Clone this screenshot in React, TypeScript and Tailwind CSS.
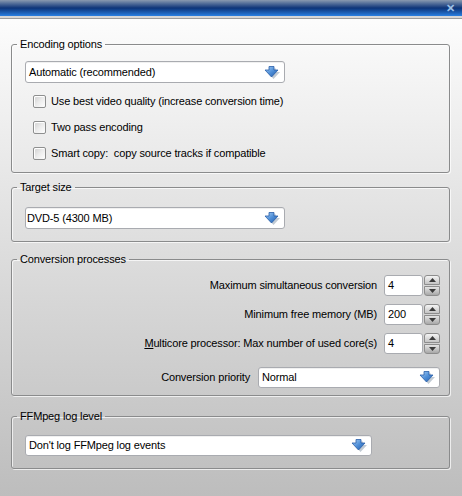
import React from "react";

const font = { fontFamily: '"Liberation Sans", Arial, sans-serif' };

function DropArrow() {
  return (
    <svg width="16" height="13" viewBox="0 0 16 13">
      <defs>
        <linearGradient id="ag" x1="0" y1="0" x2="1" y2="1">
          <stop offset="0" stopColor="#a9d0f5" />
          <stop offset="0.5" stopColor="#4f8fd8" />
          <stop offset="1" stopColor="#1f5aa8" />
        </linearGradient>
      </defs>
      <polygon points="6,1.5 11,1.5 11,5 15,5 8.5,12 2,5 6,5" fill="#9aa8b8" opacity="0.6" transform="translate(1,1)" />
      <polygon points="5,0.5 10,0.5 10,4 14,4 7.5,11 1,4 5,4" fill="url(#ag)" stroke="#2a5ea8" strokeWidth="0.8" strokeLinejoin="round" />
    </svg>
  );
}

const txt = "text-[11px] tracking-[-0.15px] text-black leading-none whitespace-pre";

function Dropdown({ text, className }: { text: string; className: string }) {
  return (
    <div
      className={
        "flex items-center justify-between bg-white border border-[#a9abb0] rounded-[3px] pl-[3px] pr-[4px] shadow-[inset_0_1px_0_#f0f0f0] " +
        className
      }
    >
      <span className={txt}>{text}</span>
      <DropArrow />
    </div>
  );
}

function Checkbox({ label }: { label: string }) {
  return (
    <div className="flex items-center h-[26px] pl-[21px]">
      <div className="w-[13px] h-[13px] border border-[#8e8f8f] rounded-[2px] bg-gradient-to-br from-[#cfcfcf] via-[#ececec] to-white shadow-[inset_1px_1px_0_#fff]" />
      <span className={"ml-[5px] " + txt}>{label}</span>
    </div>
  );
}

function Spinner() {
  return (
    <div className="flex flex-col w-[16px] h-[21px] gap-[1px]">
      <div className="flex-1 flex items-center justify-center rounded-t-[3px] border border-[#8d8d8d] bg-gradient-to-b from-[#f4f4f4] to-[#c4c4c4]">
        <svg width="7" height="4" viewBox="0 0 7 4"><polygon points="0,4 7,4 3.5,0" fill="#3a3a3a" /></svg>
      </div>
      <div className="flex-1 flex items-center justify-center rounded-b-[3px] border border-[#8d8d8d] bg-gradient-to-b from-[#e4e4e4] to-[#a8a8a8]">
        <svg width="7" height="4" viewBox="0 0 7 4"><polygon points="0,0 7,0 3.5,4" fill="#3a3a3a" /></svg>
      </div>
    </div>
  );
}

function SpinRow({ label, value }: { label: React.ReactNode; value: string }) {
  return (
    <div className="flex items-center justify-end h-[22px]">
      <span className={"mr-[7px] " + txt}>{label}</span>
      <div className="w-[39px] h-[21px] bg-white border border-[#a9abb0] rounded-[3px] flex items-center pl-[3px]">
        <span className={txt}>{value}</span>
      </div>
      <div className="ml-[1px]">
        <Spinner />
      </div>
    </div>
  );
}

function Group({ title, children, className }: { title: string; children: React.ReactNode; className?: string }) {
  return (
    <fieldset
      className={
        "border border-[#8a8b8c] rounded-[3px] shadow-[inset_1px_1px_0_rgba(255,255,255,0.7),1px_1px_0_rgba(255,255,255,0.7)] " +
        (className || "")
      }
    >
      <legend className="ml-[5px] px-[3px] text-[11px] tracking-[-0.15px] leading-[14px] text-black">{title}</legend>
      {children}
    </fieldset>
  );
}

export default function App() {
  return (
    <div
      className="w-[462px] h-[496px] overflow-hidden flex flex-col bg-gradient-to-b from-[#ffffff] to-[#bdbdbd]"
      style={font}
    >
      {/* title bar */}
      <div className="relative h-[16px] bg-gradient-to-b from-[#8a9ab0] via-[#0d3478] to-[#2a80e2] flex items-center justify-end pr-[7px]">
        <span className="text-[11px] font-bold text-[#9fc0e6] leading-none">✕</span>
      </div>
      <div className="h-[2px] bg-[#d6d6d6]" />
      <div className="h-[1px] bg-[#9c9c9c]" />

      <div className="flex flex-col pl-[11px] pr-[12px] pt-[18px]">
        <Group title="Encoding options" className="pb-[6px]">
          <div className="px-[13px]">
            <Dropdown text="Automatic (recommended)" className="mt-[10px] w-[260px] h-[22px]" />
          </div>
          <div className="mt-[5px]">
            <Checkbox label="Use best video quality (increase conversion time)" />
            <Checkbox label="Two pass encoding" />
            <Checkbox label="Smart copy:  copy source tracks if compatible" />
          </div>
        </Group>

        <Group title="Target size" className="mt-[7px] pb-[12px]">
          <div className="px-[13px]">
            <Dropdown text="DVD-5 (4300 MB)" className="mt-[13px] w-[260px] h-[22px] !pl-[1px]" />
          </div>
        </Group>

        <Group title="Conversion processes" className="mt-[10px] pb-[7px]">
          <div className="pr-[9px]">
            <div className="mt-[8px] flex flex-col gap-[7px]">
              <SpinRow label="Maximum simultaneous conversion" value="4" />
              <SpinRow label="Minimum free memory (MB)" value="200" />
              <SpinRow
                label={
                  <>
                    <span className="underline">M</span>ulticore processor: Max number of used core(s)
                  </>
                }
                value="4"
              />
            </div>
            <div className="mt-[13px] flex items-center justify-end">
              <span className={"mr-[8px] " + txt}>Conversion priority</span>
              <Dropdown text="Normal" className="w-[182px] h-[21px]" />
            </div>
          </div>
        </Group>

        <Group title="FFMpeg log level" className="mt-[13px] pb-[12px]">
          <div className="px-[13px]">
            <Dropdown text="Don't log FFMpeg log events" className="mt-[12px] w-[347px] h-[21px]" />
          </div>
        </Group>
      </div>
    </div>
  );
}
